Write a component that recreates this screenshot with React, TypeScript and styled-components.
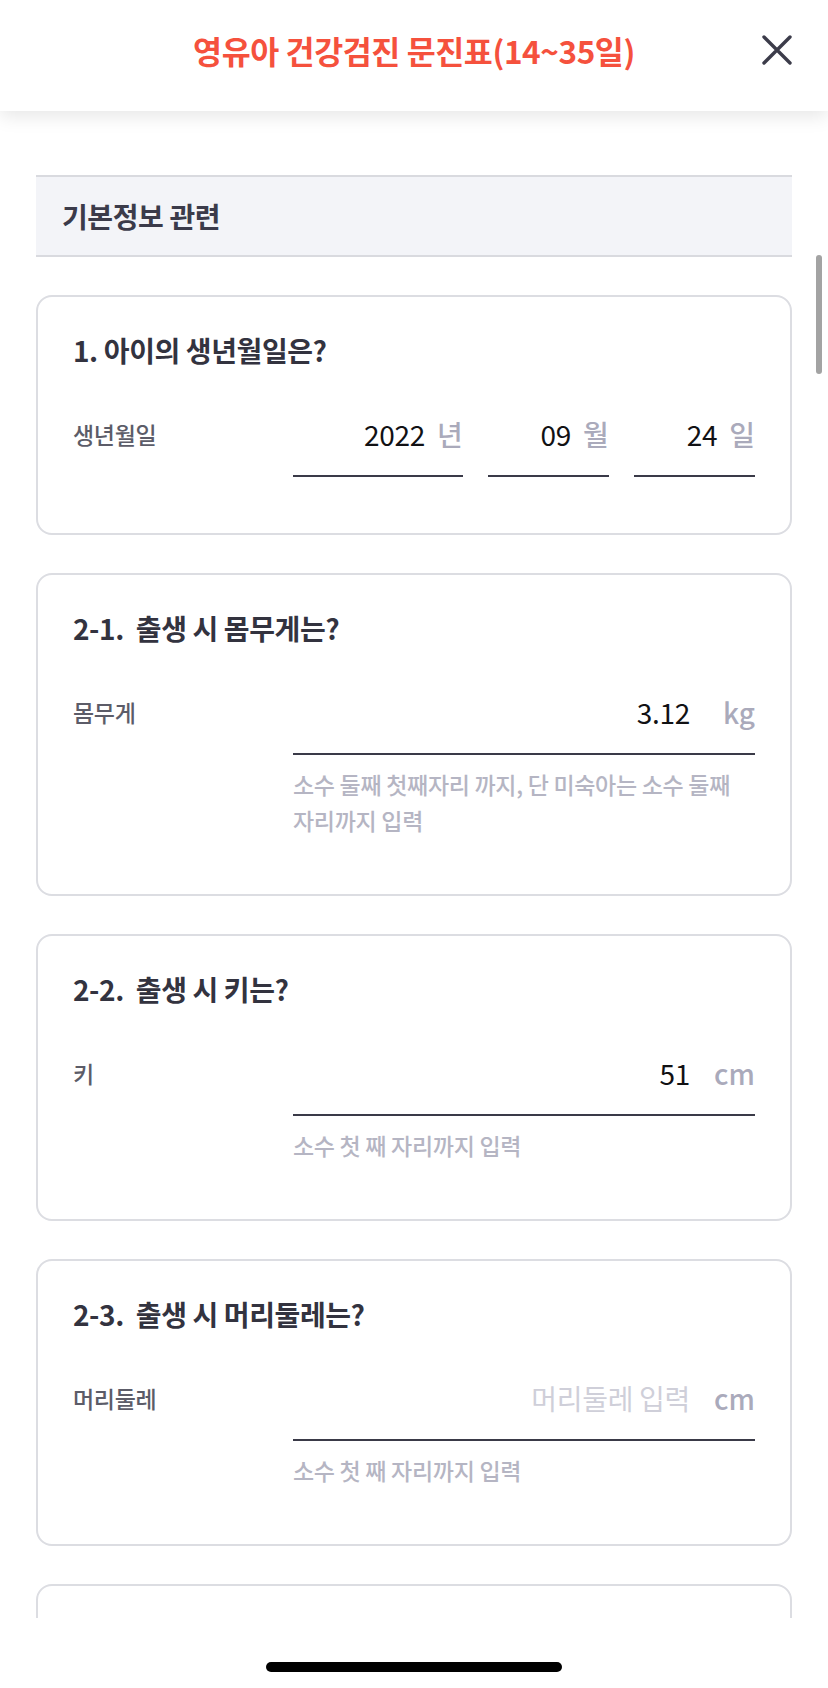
import React from "react";
import styled, { createGlobalStyle } from "styled-components";

const GlobalStyle = createGlobalStyle`
  html, body {
    margin: 0;
    padding: 0;
    background: #fff;
  }
  body {
    font-family: "Noto Sans CJK KR", "Noto Sans", sans-serif;
    -webkit-font-smoothing: antialiased;
  }
  * {
    box-sizing: border-box;
  }
`;

const Screen = styled.div`
  position: relative;
  width: 828px;
  height: 1688px;
  display: flex;
  flex-direction: column;
  background: #fff;
  overflow: hidden;
`;

const Header = styled.header`
  position: relative;
  z-index: 2;
  flex-shrink: 0;
  height: 111px;
  display: grid;
  grid-template-columns: 1fr auto 1fr;
  align-items: center;
  padding: 0 36px 12px;
  background: #fff;
  box-shadow: 0 5px 18px rgba(0, 0, 0, 0.1);
`;

const Title = styled.h1`
  grid-column: 2;
  margin: 0;
  font-size: 31.5px;
  line-height: 40px;
  font-weight: 700;
  letter-spacing: -0.4px;
  color: #f5513d;
  white-space: nowrap;
`;

const CloseButton = styled.button`
  grid-column: 3;
  justify-self: end;
  display: flex;
  width: 30px;
  height: 30px;
  padding: 0;
  border: 0;
  background: none;
`;

const Body = styled.main`
  flex: 1;
  min-height: 0;
  overflow: hidden;
  display: flex;
  flex-direction: column;
  gap: 38px;
  padding: 64px 36px 0;
`;

const SectionHeader = styled.h2`
  flex-shrink: 0;
  height: 82px;
  margin: 0;
  display: flex;
  align-items: center;
  padding: 0 26px;
  background: #f3f4f8;
  border-top: 2px solid #d9dadf;
  border-bottom: 2px solid #d9dadf;
  font-size: 28px;
  font-weight: 600;
  letter-spacing: -0.4px;
  color: #3b3b4a;
`;

const Card = styled.section<{ $minHeight?: number }>`
  flex-shrink: 0;
  min-height: ${(p) => p.$minHeight ?? 0}px;
  padding: 34px 35px 56px;
  border: 2px solid #dcdde2;
  border-radius: 16px;
  background: #fff;
`;

const Question = styled.h3`
  margin: 0 0 47px;
  font-size: 28px;
  line-height: 38px;
  font-weight: 600;
  letter-spacing: -0.4px;
  color: #33333f;
  white-space: pre;
`;

const FieldRow = styled.div`
  display: flex;
  align-items: flex-start;
`;

const FieldLabel = styled.span`
  flex-shrink: 0;
  width: 220px;
  font-size: 23px;
  line-height: 36px;
  font-weight: 500;
  letter-spacing: -0.3px;
  color: #5c5c68;
`;

const FieldBody = styled.div`
  flex: 1;
  min-width: 0;
`;

const DateGrid = styled.div`
  display: grid;
  grid-template-columns: 1.4fr 1fr 1fr;
  column-gap: 25px;
`;

const InputBox = styled.div`
  display: flex;
  align-items: center;
  justify-content: flex-end;
  padding-bottom: 23px;
  border-bottom: 2px solid #3a3a48;
`;

const Value = styled.span<{ $placeholder?: boolean }>`
  font-size: 28px;
  line-height: 36px;
  letter-spacing: -0.3px;
  color: ${(p) => (p.$placeholder ? "#cfcfd9" : "#111114")};
  white-space: nowrap;
`;

const Unit = styled.span<{ $wide?: boolean }>`
  font-size: 28px;
  line-height: 36px;
  font-weight: 500;
  color: #aaaabb;
  text-align: right;
  width: ${(p) => (p.$wide ? "52px" : "auto")};
  margin-left: ${(p) => (p.$wide ? "13px" : "12px")};
`;

const Hint = styled.p`
  margin: 11px 0 0;
  font-size: 23px;
  line-height: 36px;
  font-weight: 500;
  letter-spacing: -0.3px;
  color: #b5b5c3;
  word-break: keep-all;
`;

const ScrollThumb = styled.div`
  position: absolute;
  top: 255px;
  right: 6px;
  width: 6px;
  height: 119px;
  border-radius: 3px;
  background: #a3a3a3;
`;

const BottomBar = styled.div`
  flex-shrink: 0;
  height: 70px;
  display: flex;
  justify-content: center;
  align-items: flex-start;
  padding-top: 44px;
  background: #fff;
`;

const HomeIndicator = styled.div`
  width: 296px;
  height: 10px;
  border-radius: 5px;
  background: #000;
`;

const CloseIcon = () => (
  <svg width="30" height="30" viewBox="0 0 30 30" fill="none">
    <path
      d="M2 2 L28 28 M28 2 L2 28"
      stroke="#3c3c4a"
      strokeWidth="3.4"
      strokeLinecap="round"
    />
  </svg>
);

type Measure = {
  title: string;
  label: string;
  value: string;
  placeholder?: boolean;
  unit: string;
  hint: string;
};

const birthDate = [
  { value: "2022", unit: "년" },
  { value: "09", unit: "월" },
  { value: "24", unit: "일" },
];

const measures: Measure[] = [
  {
    title: "2-1.  출생 시 몸무게는?",
    label: "몸무게",
    value: "3.12",
    unit: "kg",
    hint: "소수 둘째 첫째자리 까지, 단 미숙아는 소수 둘째 자리까지 입력",
  },
  {
    title: "2-2.  출생 시 키는?",
    label: "키",
    value: "51",
    unit: "cm",
    hint: "소수 첫 째 자리까지 입력",
  },
  {
    title: "2-3.  출생 시 머리둘레는?",
    label: "머리둘레",
    value: "머리둘레 입력",
    placeholder: true,
    unit: "cm",
    hint: "소수 첫 째 자리까지 입력",
  },
];

export default function App() {
  return (
    <>
      <GlobalStyle />
      <Screen>
        <Header>
          <Title>영유아 건강검진 문진표(14~35일)</Title>
          <CloseButton aria-label="닫기">
            <CloseIcon />
          </CloseButton>
        </Header>

        <Body>
          <SectionHeader>기본정보 관련</SectionHeader>

          <Card>
            <Question>1. 아이의 생년월일은?</Question>
            <FieldRow>
              <FieldLabel>생년월일</FieldLabel>
              <FieldBody>
                <DateGrid>
                  {birthDate.map((d) => (
                    <InputBox key={d.unit}>
                      <Value>{d.value}</Value>
                      <Unit>{d.unit}</Unit>
                    </InputBox>
                  ))}
                </DateGrid>
              </FieldBody>
            </FieldRow>
          </Card>

          {measures.map((m) => (
            <Card key={m.title}>
              <Question>{m.title}</Question>
              <FieldRow>
                <FieldLabel>{m.label}</FieldLabel>
                <FieldBody>
                  <InputBox>
                    <Value $placeholder={m.placeholder}>{m.value}</Value>
                    <Unit $wide>{m.unit}</Unit>
                  </InputBox>
                  <Hint>{m.hint}</Hint>
                </FieldBody>
              </FieldRow>
            </Card>
          ))}

          <Card $minHeight={240} />
        </Body>

        <BottomBar>
          <HomeIndicator />
        </BottomBar>

        <ScrollThumb />
      </Screen>
    </>
  );
}
